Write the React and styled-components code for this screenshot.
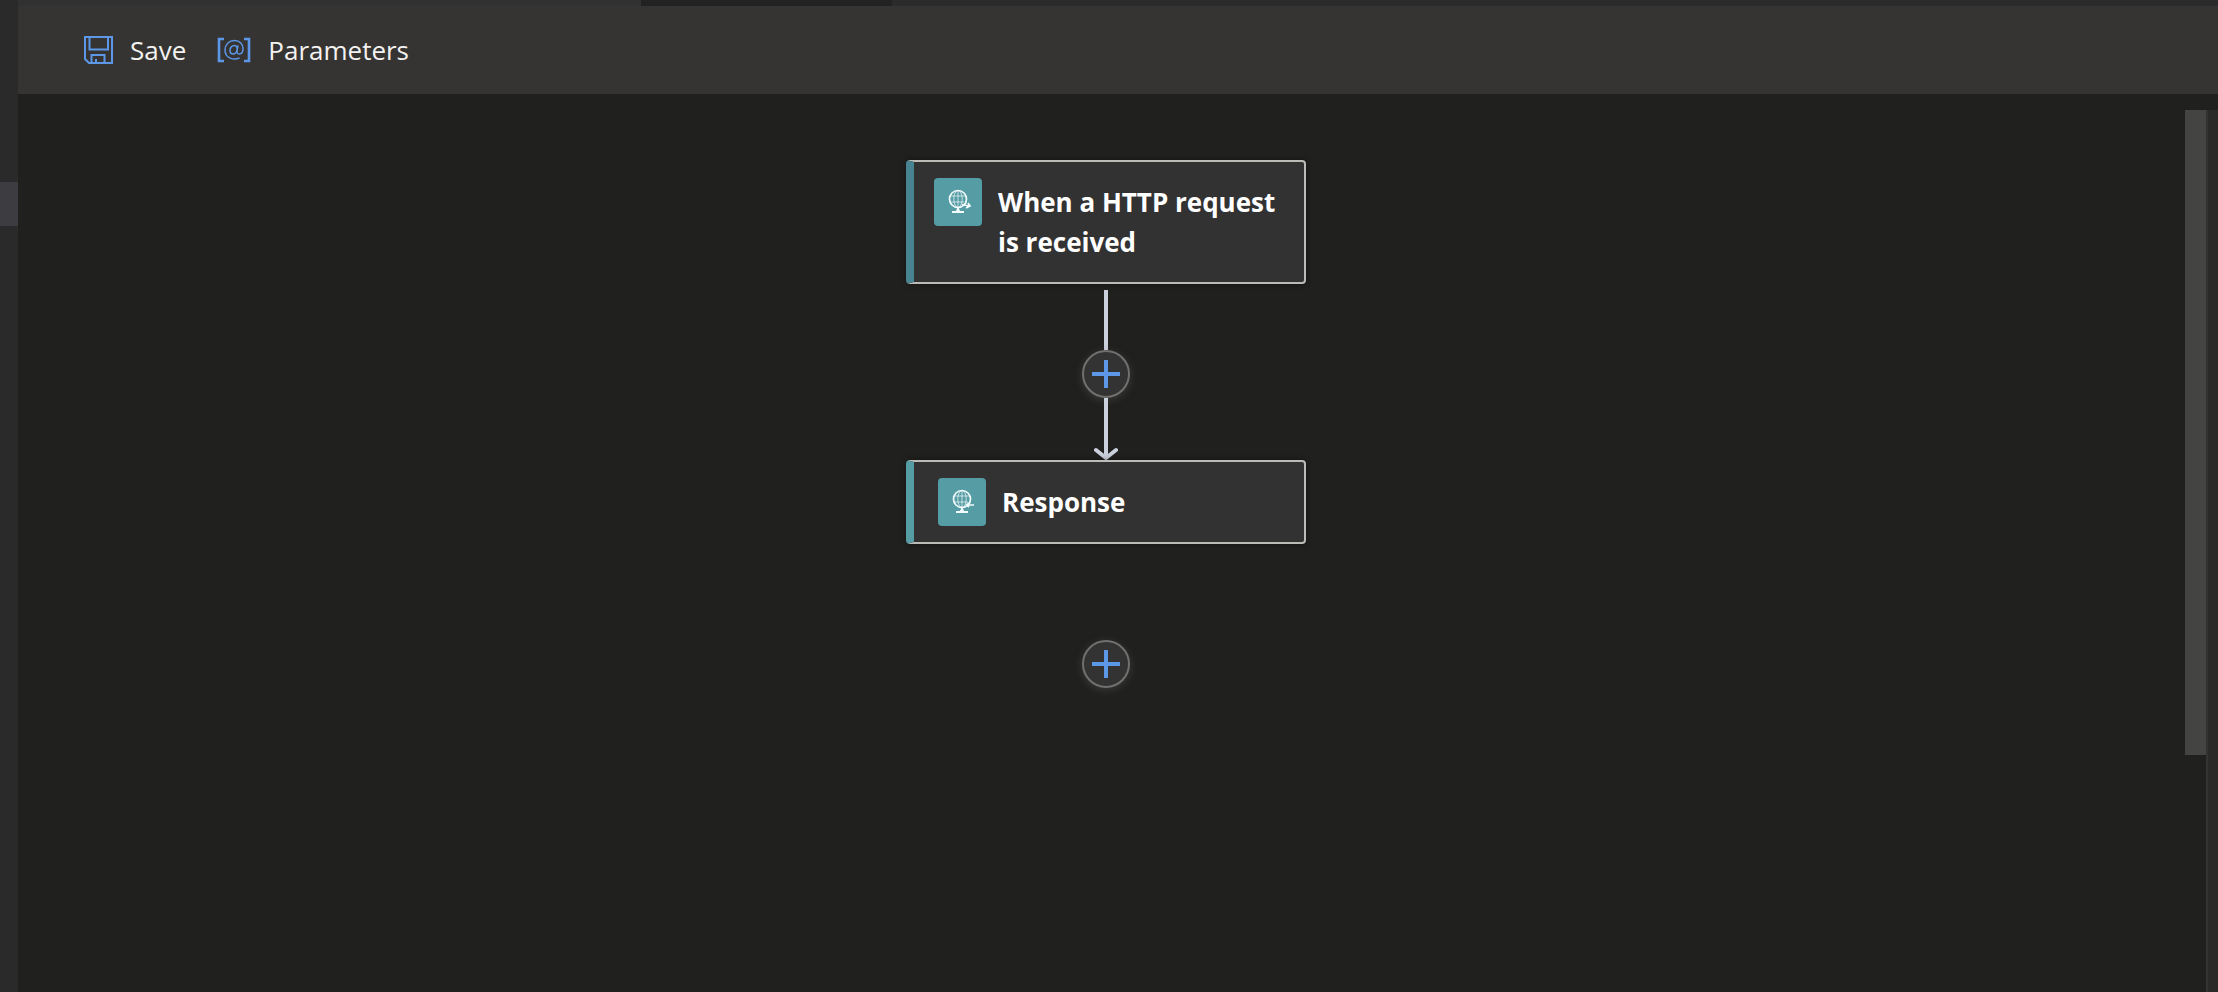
import React from "react";
import styled, { createGlobalStyle } from "styled-components";

const GlobalStyle = createGlobalStyle`
  *, *::before, *::after { box-sizing: border-box; }
  body {
    margin: 0;
    background: #20201e;
    color: #f3f2f1;
    font-family: "Segoe UI", "Open Sans", "Noto Sans", sans-serif;
  }
  button { font: inherit; color: inherit; cursor: pointer; }
`;

const Page = styled.div`
  display: grid;
  grid-template-columns: 18px minmax(0, 1fr);
  min-height: 100vh;
`;

const Rail = styled.nav`
  background: #2a2a2a;
  padding-top: 182px;
`;

const RailItem = styled.div`
  height: 44px;
  background: #3d3c41;
`;

const Main = styled.main`
  display: flex;
  flex-direction: column;
`;

const TabStrip = styled.div`
  display: flex;
  height: 6px;
  background: #2b2b2b;
`;

const Tab = styled.div`
  flex: 0 1 ${(p) => p.$width}px;
  background: ${(p) => (p.$dark ? "#222222" : "#313131")};
`;

const Toolbar = styled.header`
  display: flex;
  align-items: center;
  gap: 30px;
  height: 88px;
  padding: 0 66px;
  background: #353432;
`;

const ToolButton = styled.button`
  display: flex;
  align-items: center;
  gap: 16px;
  padding: 0;
  border: 0;
  background: none;
  font-size: 26px;
  line-height: 36px;

  svg { display: block; color: #5c97e8; }
`;

const Workspace = styled.div`
  display: flex;
  flex: 1;
`;

const Canvas = styled.section`
  flex: 1;
  display: flex;
  flex-direction: column;
  align-items: center;
  padding: 66px 0 66px 9px;
`;

const Card = styled.button`
  display: flex;
  align-items: flex-start;
  gap: 16px;
  width: 400px;
  min-height: ${(p) => p.$height}px;
  padding: 16px 24px 16px ${(p) => p.$inset}px;
  border: 2px solid #bdbbb8;
  border-left: 8px solid ${(p) => p.$accent};
  border-radius: 4px;
  background: #323232;
  box-shadow: 0 0 6px rgba(0, 0, 0, 0.4);
  text-align: left;
`;

const Badge = styled.span`
  flex: none;
  width: 48px;
  height: 48px;
  border-radius: 4px;
  background: #559ca4;

  svg { display: block; }
`;

const CardTitle = styled.span`
  padding-top: 4px;
  font-size: 26px;
  line-height: 40px;
  font-weight: 700;
  color: #ffffff;
`;

const Connector = styled.div`
  display: flex;
  flex-direction: column;
  align-items: center;
  padding-top: 6px;

  svg { display: block; }
`;

const Line = styled.div`
  width: 4px;
  height: 60px;
  background: #cbd0dd;
`;

const AddButton = styled.button`
  display: block;
  width: 48px;
  height: 48px;
  padding: 0;
  border: 2px solid #72706e;
  border-radius: 50%;
  background: #333333;
  box-shadow: 0 2px 8px rgba(110, 110, 110, 0.35);

  svg { display: block; }
`;

const Tail = styled.div`
  padding-top: 96px;
`;

const ScrollTrack = styled.div`
  width: 21px;
  padding-top: 16px;
`;

const ScrollThumb = styled.div`
  height: 645px;
  background: #444442;
`;

const Gutter = styled.div`
  width: 12px;
  margin-top: 16px;
  background: #2a2a28;
  border-left: 2px solid #333331;
`;

function SaveIcon() {
  return (
    <svg width="30" height="30" viewBox="0 0 30 30" fill="none" stroke="currentColor" strokeWidth="2" aria-hidden="true">
      <path d="M1 2H28V28H5L1 24Z" />
      <path d="M5.500 2V14.500H24V2" />
      <path d="M7.500 28V20H20.500V28M12 28V24" />
    </svg>
  );
}

function ParametersIcon() {
  return (
    <svg width="36" height="28" viewBox="0 0 36 28" fill="none" stroke="currentColor" aria-hidden="true">
      <path d="M8 3H3V25H8M28 3H33V25H28" strokeWidth="2.600" />
      <path d="M23.500 22C18 24.500 9 22.500 9 14C9 8.500 13 4.500 18.500 4.500C24 4.500 27 8.300 27 12.500C27 16 25.200 18 23.200 18C21.300 18 20.700 16.500 21 14.500L22 9.500" strokeWidth="1.500" />
      <path d="M21.300 12.500C21 10.600 19.800 9.500 18.200 9.500C15.800 9.500 14 11.800 14 14.500C14 16.700 15.200 18 17 18C19 18 20.600 16.500 21 14.200" strokeWidth="1.500" />
    </svg>
  );
}

function GlobeIcon({ reply }) {
  return (
    <svg width="48" height="48" viewBox="0 0 48 48" fill="none" stroke="#f2fbfc" aria-hidden="true">
      <circle cx="24" cy="21" r="8.500" strokeWidth="1.700" />
      <path d="M24 12.500V29.500M16 18H32M16 24H30" strokeWidth="1" opacity="0.700" />
      <ellipse cx="24" cy="21" rx="4.200" ry="8.500" strokeWidth="1" opacity="0.700" />
      <path d="M24 29.500V33M18 34H30" strokeWidth="2" />
      <circle cx="24" cy="33" r="2" fill="#f2fbfc" stroke="none" />
      {reply ? (
        <path d="M28 27H36M31 25L28.500 27L31 29" strokeWidth="1.700" />
      ) : (
        <path d="M28 26.500L35 28M34 25L36 28L32 30" strokeWidth="1.700" />
      )}
    </svg>
  );
}

function PlusIcon() {
  return (
    <svg width="44" height="44" viewBox="0 0 44 44" stroke="#5c97e8" strokeWidth="4" aria-hidden="true">
      <path d="M22 8V36M8 22H36" />
    </svg>
  );
}

function ArrowIcon() {
  return (
    <svg width="24" height="62" viewBox="0 0 24 62" fill="none" stroke="#cbd0dd" strokeWidth="4" aria-hidden="true">
      <path d="M12 0V60" />
      <path d="M2 52L12 60L22 52" strokeLinecap="round" strokeLinejoin="round" />
    </svg>
  );
}

export default function App() {
  return (
    <>
      <GlobalStyle />
      <Page>
        <Rail>
          <RailItem />
        </Rail>
        <Main>
          <TabStrip>
            <Tab $width={623} />
            <Tab $width={251} $dark />
          </TabStrip>
          <Toolbar>
            <ToolButton type="button">
              <SaveIcon />
              Save
            </ToolButton>
            <ToolButton type="button">
              <ParametersIcon />
              Parameters
            </ToolButton>
          </Toolbar>
          <Workspace>
            <Canvas>
              <Card type="button" $height={124} $inset={20} $accent="#478391">
                <Badge>
                  <GlobeIcon />
                </Badge>
                <CardTitle>When a HTTP request is received</CardTitle>
              </Card>
              <Connector>
                <Line />
                <AddButton type="button" aria-label="Insert a step">
                  <PlusIcon />
                </AddButton>
                <ArrowIcon />
              </Connector>
              <Card type="button" $height={84} $inset={24} $accent="#559ca4">
                <Badge>
                  <GlobeIcon reply />
                </Badge>
                <CardTitle>Response</CardTitle>
              </Card>
              <Tail>
                <AddButton type="button" aria-label="Add a step at the end">
                  <PlusIcon />
                </AddButton>
              </Tail>
            </Canvas>
            <ScrollTrack>
              <ScrollThumb />
            </ScrollTrack>
            <Gutter />
          </Workspace>
        </Main>
      </Page>
    </>
  );
}
